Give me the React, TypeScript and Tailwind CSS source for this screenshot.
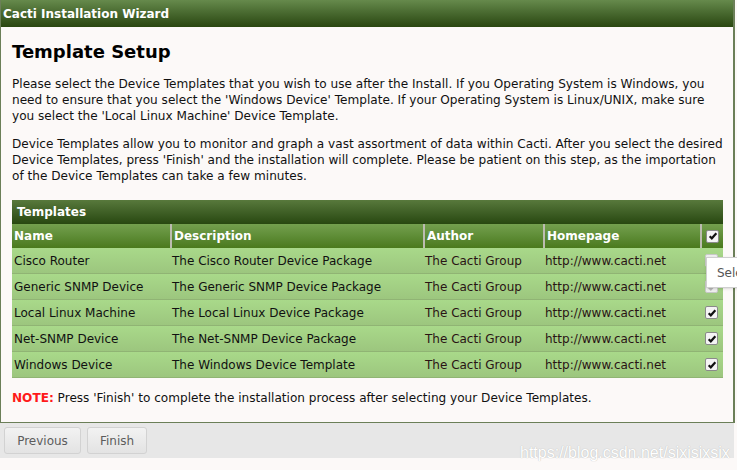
import React from 'react';

const rows = [
  ['Cisco Router', 'The Cisco Router Device Package', false],
  ['Generic SNMP Device', 'The Generic SNMP Device Package', false],
  ['Local Linux Machine', 'The Local Linux Device Package', true],
  ['Net-SNMP Device', 'The Net-SNMP Device Package', true],
  ['Windows Device', 'The Windows Device Template', true],
] as const;

function Check({ enabled }: { enabled: boolean }) {
  return (
    <span
      className={`inline-flex h-[13px] w-[13px] items-center justify-center rounded-[2px] border ${
        enabled ? 'border-[#8a8a8a] bg-[#f4f4f4]' : 'border-[#c8c8c8] bg-[#efefef]'
      }`}
    >
      <svg viewBox="0 0 12 12" className="h-[10px] w-[10px]">
        <path
          d="M2 6.2 L4.6 8.8 L10 2.8"
          fill="none"
          stroke={enabled ? '#111' : '#b9b9b9'}
          strokeWidth="2.6"
        />
      </svg>
    </span>
  );
}

export default function App() {
  return (
    <div className="relative h-[470px] w-[737px] overflow-hidden bg-[#fcf9f8] font-['DejaVu_Sans',Verdana,sans-serif] text-[12px] text-[#111]">
      <div className="w-[735px] border-r-2 border-l border-[#6b7f58] border-b">
        <div className="flex h-[27px] items-center bg-gradient-to-b from-[#668a4c] to-[#2a4710] pl-[2px] text-[12px] font-bold text-white">
          Cacti Installation Wizard
        </div>
        <div className="px-[11px] pb-[16px]">
          <h1 className="pt-[13px] text-[18px] font-bold leading-[24px] text-black">Template Setup</h1>
          <p className="mt-[12px] whitespace-nowrap text-[12.1px] leading-[16px]">
            Please select the Device Templates that you wish to use after the Install. If you Operating System is Windows, you
            <br />
            need to ensure that you select the 'Windows Device' Template. If your Operating System is Linux/UNIX, make sure
            <br />
            you select the 'Local Linux Machine' Device Template.
          </p>
          <p className="mt-[12px] whitespace-nowrap text-[12.1px] leading-[16px]">
            Device Templates allow you to monitor and graph a vast assortment of data within Cacti. After you select the desired
            <br />
            Device Templates, press 'Finish' and the installation will complete. Please be patient on this step, as the importation
            <br />
            of the Device Templates can take a few minutes.
          </p>

          <div className="mt-[16px] w-[711px]">
            <div className="flex h-[24px] items-center bg-gradient-to-b from-[#58793c] to-[#284810] pl-[5px] text-[12px] font-bold text-white">
              Templates
            </div>
            <div className="grid h-[24px] grid-cols-[158px_253px_120px_157px_23px] bg-gradient-to-b from-[#74a04e] to-[#4a7a1c] text-[12px] font-bold text-white">
              <div className="flex items-center pl-[2px]">Name</div>
              <div className="flex items-center border-l-2 border-[#bcbcb0] pl-[2px]">Description</div>
              <div className="flex items-center border-l-2 border-[#bcbcb0] pl-[2px]">Author</div>
              <div className="flex items-center border-l-2 border-[#bcbcb0] pl-[2px]">Homepage</div>
              <div className="flex items-center justify-center border-l-2 border-[#bcbcb0]">
                <Check enabled />
              </div>
            </div>
            {rows.map(([name, desc, enabled]) => (
              <div
                key={name}
                className="grid h-[26px] grid-cols-[158px_253px_120px_157px_23px] border-b border-[#90b474] bg-gradient-to-b from-[#a9d98a] to-[#9cc67e] text-[12px]"
              >
                <div className="flex items-center pl-[2px] text-[#111]">{name}</div>
                <div className="flex items-center pl-[2px] text-[#111]">{desc}</div>
                <div className="flex items-center pl-[2px] text-[#2a1414]">The Cacti Group</div>
                <div className="flex items-center pl-[2px] text-[#2a1414]">http://www.cacti.net</div>
                <div className="flex items-center justify-center">
                  <Check enabled={enabled} />
                </div>
              </div>
            ))}
          </div>

          <p className="mt-[12px] whitespace-nowrap text-[12.1px] leading-[16px]">
            <span className="font-bold text-[#ff1a1a]">NOTE:</span> Press 'Finish' to complete the installation process after selecting your Device Templates.
          </p>
        </div>
      </div>

      <div className="flex h-[35px] w-[734px] items-center gap-[6px] bg-[#e7e7e7] pl-[4px]">
        <button className="h-[27px] w-[77px] rounded-[3px] border border-[#d2d2d2] bg-gradient-to-b from-[#f2f2f2] to-[#e3e3e3] text-[12px] text-[#5c5c5c]">
          Previous
        </button>
        <button className="h-[27px] w-[60px] rounded-[3px] border border-[#d2d2d2] bg-gradient-to-b from-[#f2f2f2] to-[#e3e3e3] text-[12px] text-[#5c5c5c]">
          Finish
        </button>
      </div>

      <div className="absolute left-[706px] top-[257px] flex h-[31px] w-[40px] items-center border border-[#cfcfcf] bg-white pl-[10px] text-[12px] text-[#555] shadow-sm">
        Sele
      </div>

      <div className="absolute left-[520px] top-[441px] font-['Liberation_Sans',Arial,sans-serif] text-[16px] text-white [text-shadow:0_0_1px_#aaa]">
        https://blog.csdn.net/sixisixsix
      </div>
    </div>
  );
}
